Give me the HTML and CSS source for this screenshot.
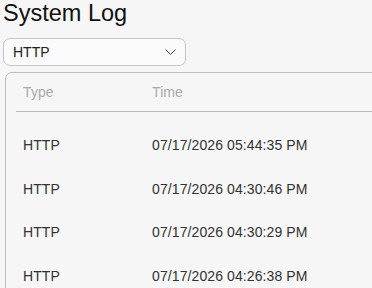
FILE: index.html
```html
<!DOCTYPE html>
<html lang="en">
<head>
    <meta charset="UTF-8">
    <meta name="viewport" content="width=device-width, initial-scale=1.0">
    <title>System Log</title>
    <link rel="stylesheet" href="styles.css">
</head>
<body>
    <div class="page">
        <h1 class="title">System Log</h1>

        <div class="select">
            <span>HTTP</span>
            <svg class="chevron" width="11" height="6" viewBox="0 0 11 6">
                <path d="M0.5 0.5 L5.5 5.5 L10.5 0.5" fill="none" stroke="#444" stroke-width="1"/>
            </svg>
        </div>

        <div class="card">
            <div class="table">
                <div class="row head">
                    <div class="col type">Type</div>
                    <div class="col">Time</div>
                </div>
                <div class="rows">
                    <div class="row">
                        <div class="col type">HTTP</div>
                        <div class="col">07/17/2026 05:44:35 PM</div>
                    </div>
                    <div class="row">
                        <div class="col type">HTTP</div>
                        <div class="col">07/17/2026 04:30:46 PM</div>
                    </div>
                    <div class="row">
                        <div class="col type">HTTP</div>
                        <div class="col">07/17/2026 04:30:29 PM</div>
                    </div>
                    <div class="row">
                        <div class="col type">HTTP</div>
                        <div class="col">07/17/2026 04:26:38 PM</div>
                    </div>
                </div>
            </div>
        </div>
    </div>
</body>
</html>
```

FILE: styles.css
```css
html, body {
    margin: 0;
    padding: 0;
    background-color: #f6f6f6;
    overflow: hidden;
}

body {
    font-family: "Liberation Sans", Arial, sans-serif;
    color: #333;
}

.page {
    padding: 0 3px;
}

.title {
    margin: 0;
    font-size: 23.5px;
    line-height: 27px;
    font-weight: normal;
    color: #111;
}

.select {
    height: 26px;
    width: 163px;
    margin-top: 11px;
    padding: 0 9px;
    border: solid 1px #c4c4c4;
    border-radius: 7px;
    background-color: #fafafa;
    display: flex;
    align-items: center;
    justify-content: space-between;
    font-size: 14px;
    color: #222;
}

.chevron {
    display: block;
}

.card {
    margin-top: 6px;
    margin-left: 2px;
    width: 420px;
    height: 240px;
    border: solid 1px #bdbdbd;
    border-radius: 7px;
    padding-left: 10px;
}

.row {
    display: flex;
    align-items: center;
    height: 43.5px;
    font-size: 14px;
    letter-spacing: 0.1px;
}

.row.head {
    height: 38px;
    border-bottom: solid 1px #bbb;
    color: #aaa;
}

.rows {
    padding-top: 11.5px;
}

.col {
    padding-left: 7px;
}

.col.type {
    width: 129px;
    box-sizing: border-box;
}
```
